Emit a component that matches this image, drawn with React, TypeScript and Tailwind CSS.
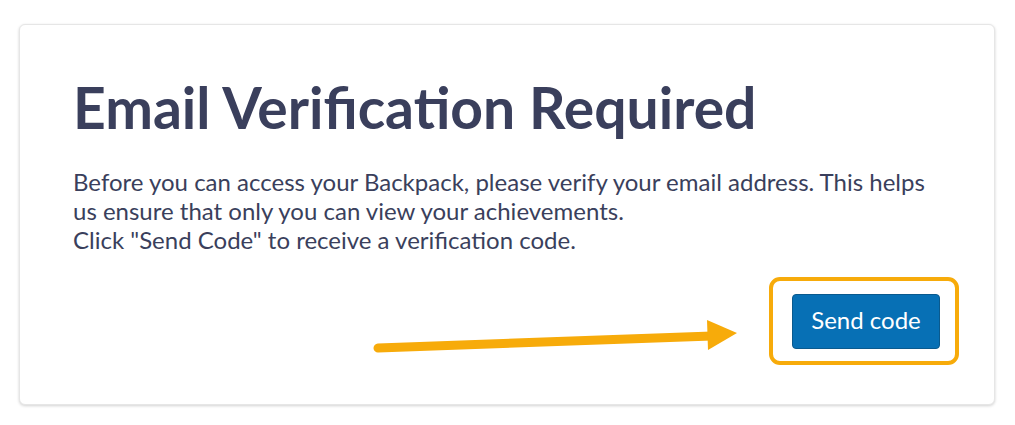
import React from "react";

export default function App() {
  return (
    <div className="relative w-[1015px] h-[425px] bg-white" style={{ fontFamily: "Lato, 'Noto Sans', sans-serif" }}>
      <div className="absolute left-[19px] top-[24px] w-[976px] h-[381px] rounded-[6px] border border-[#e6e6e6] bg-white shadow-[0_1px_3px_rgba(0,0,0,0.18)]">
        <div className="pl-[53px] pr-[54px] pt-[47px]">
          <h1 className="text-[57px] leading-[70px] font-bold text-[#3a3f5c]">Email Verification Required</h1>
          <p className="mt-[25px] text-[24px] leading-[29px] text-[#3a3f5c] whitespace-nowrap">
            Before you can access your Backpack, please verify your email address. This helps
            <br />
            us ensure that only you can view your achievements.
            <br />
            Click "Send Code" to receive a verification code.
          </p>
          <div className="mt-[40px] flex justify-end">
            <button className="w-[148px] h-[55px] rounded-[4px] bg-[#0770b5] border border-[#0a5a8e] text-white text-[24px] pb-[3px]">
              Send code
            </button>
          </div>
        </div>
      </div>
      <div className="absolute left-[769px] top-[277px] w-[190px] h-[88px] rounded-[11px] border-[4px] border-[#f7ab0a]" />
      <svg className="absolute left-0 top-0" width="1015" height="425">
        <line x1="378" y1="348" x2="712" y2="336" stroke="#f7ab0a" strokeWidth="9" strokeLinecap="round" />
        <polygon points="707,320 737,333 708,350" fill="#f7ab0a" />
      </svg>
    </div>
  );
}
